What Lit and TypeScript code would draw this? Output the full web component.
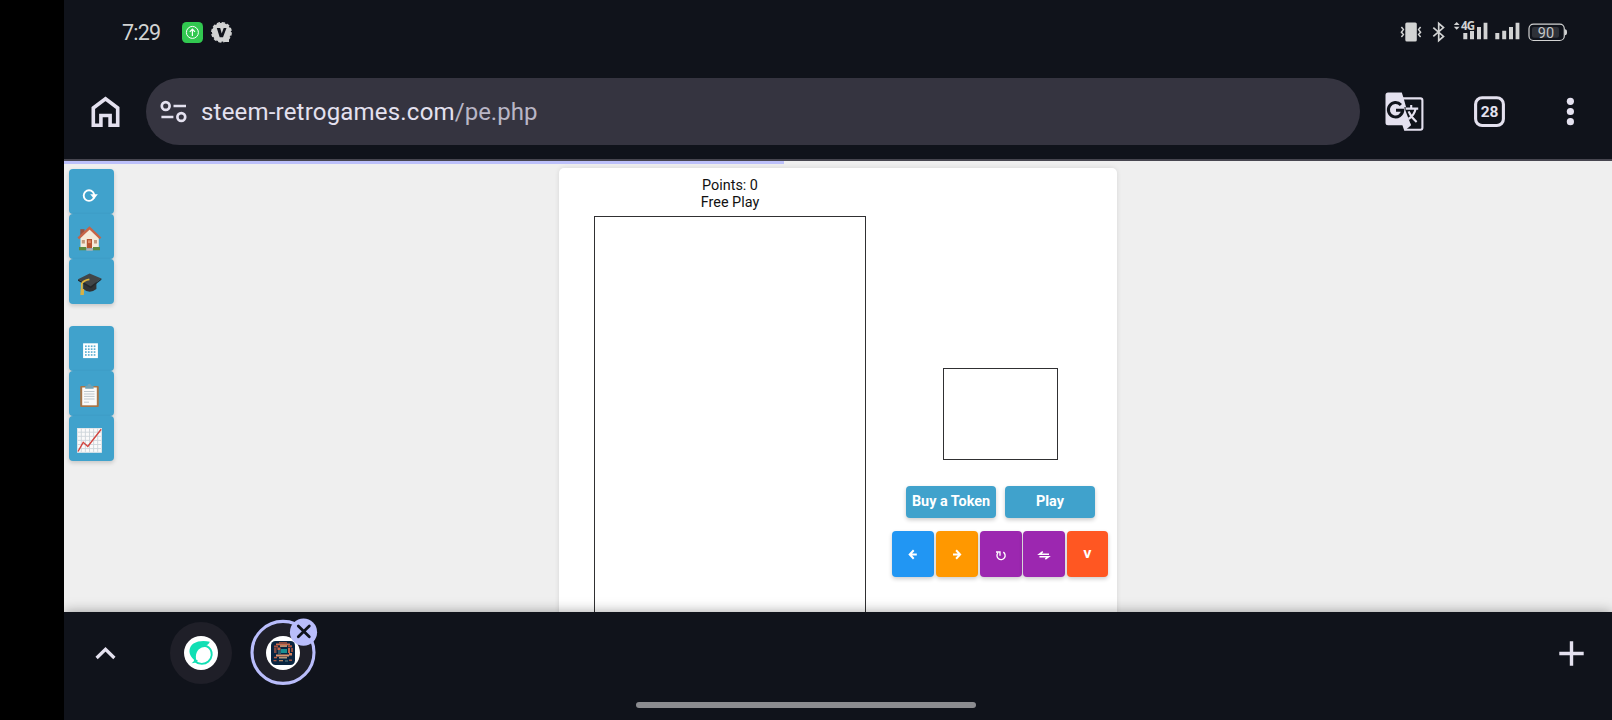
import { LitElement, html, svg, css } from "lit";
import { customElement } from "lit/decorators.js";

const icon = (x: number, y: number, w: number, h: number, body: unknown) =>
  html`<svg width=${w} height=${h} viewBox="${x} ${y} ${w} ${h}" aria-hidden="true">${body}</svg>`;

@customElement("status-bar")
class StatusBar extends LitElement {
  static styles = css`
    :host { display: flex; align-items: center; height: 64px; padding: 0 42px 0 58px; color: #d2d3d3; }
    .time { width: 60px; font: 21.5px/65px Roboto, sans-serif; letter-spacing: -0.8px; }
    .spacer { flex: 1; }
    svg { display: block; }
    .net { font: 700 11.5px "Open Sans", sans-serif; letter-spacing: -0.8px; }
    .bat { font: 14.5px Roboto, sans-serif; }
  `;
  render() {
    return html`
      <span class="time">7:29</span>
      ${icon(182, 0, 54, 64, svg`
        <rect x="182" y="22" width="21" height="21" rx="4.5" fill="#31c850"/>
        <circle cx="192.4" cy="32.4" r="6" fill="none" stroke="#fff" stroke-width="1"/>
        <path d="M192.4 36v-6.6M189.8 31.8l2.6-2.6 2.6 2.6" fill="none" stroke="#fff" stroke-width="1.2"/>
        <circle cx="221.5" cy="32.3" r="9.5" fill="#d2d3d3"/>
        <circle cx="221.5" cy="32.3" r="9.6" fill="none" stroke="#d2d3d3" stroke-width="1.6" stroke-dasharray="3.2 1.83"/>
        <path d="M225 36h4v6h-4z" fill="#d2d3d3"/>
        <path d="M216.8 28h3.4l1.5 5.6 2-5.6h2.8l-3.5 9.2h-3.3z" fill="#10131b"/>`)}
      <span class="spacer"></span>
      ${icon(1400, 0, 170, 64, svg`
        <rect x="1405.3" y="22.5" width="11.5" height="19" rx="1.5" fill="#d2d3d3"/>
        <path d="M1401.4 27l2 2.6-2 2.6 2 2.4-2 2.4M1420.6 27l-2 2.6 2 2.6-2 2.4 2 2.4" fill="none" stroke="#d2d3d3" stroke-width="1.5"/>
        <path d="M1433.3 27.6l10.2 8.8-4.8 4.2V23.4l4.8 4.2-10.2 8.8" fill="none" stroke="#d2d3d3" stroke-width="1.7"/>
        <path d="M1453.8 25l2.9-3 2.9 3zM1453.8 26.8l2.9 3 2.9-3z" fill="#d2d3d3"/>
        <path d="M1463.3 33h4v6.3h-4zM1470 31h4v8.3h-4zM1477 27h4v12.3h-4zM1483.6 22.7h3.8v16.6h-3.8zM1495.3 33h4v6.3h-4zM1502.2 30.7h4v8.6h-4zM1509 27h4v12.3h-4zM1515.6 22.7h3.8v16.6h-3.8z" fill="#d2d3d3"/>
        <text class="net" x="1461" y="30.2" fill="#d2d3d3">4G</text>
        <rect x="1532" y="27" width="27" height="10.7" rx="2" fill="#2e3138"/>
        <rect x="1529" y="24.2" width="35.3" height="16.3" rx="4.5" fill="none" stroke="#d2d3d3" stroke-width="1.2"/>
        <path d="M1565 29.3c1.3 0 2 .8 2 3s-.7 3-2 3z" fill="#d2d3d3"/>
        <text class="bat" x="1546" y="37.5" text-anchor="middle" fill="#c4c5c7">90</text>`)}
    `;
  }
}

@customElement("browser-toolbar")
class BrowserToolbar extends LitElement {
  static styles = css`
    :host { display: flex; align-items: flex-start; height: 95px; padding: 14px 36px 0 25px; box-sizing: border-box; }
    svg { display: block; flex: none; }
    .home { width: 57px; }
    .url { display: flex; align-items: center; width: 1214px; height: 67px; border-radius: 34px; background: #353440; box-sizing: border-box; padding-left: 14px; margin-right: 25px; }
    .text { margin-left: 14px; font: 24px/66px Roboto, sans-serif; color: #e4e1ef; white-space: nowrap; }
    .host { letter-spacing: 0.2px; }
    .path { color: #b9b6c6; }
    .tabs { margin-left: 50px; }
    .more { margin-left: 60px; }
    .count { font: 700 15.5px Roboto, sans-serif; }
  `;
  render() {
    return html`
      <div class="home">${icon(89, 78, 34, 67, svg`<path d="M93.3 125.2V108l12.2-9.2 12.2 9.2v17.2h-7.6v-9.7h-9.2v9.7z" fill="none" stroke="#e4e1ef" stroke-width="3.6"/>`)}</div>
      <div class="url">
        ${icon(160, 78, 27, 67, svg`<g fill="none" stroke="#e4e1ef" stroke-width="2.7"><circle cx="165.7" cy="106" r="3.9"/><circle cx="181.3" cy="117" r="3.9"/><path d="M173.5 106H186M161.4 117h12"/></g>`)}
        <span class="text"><span class="host">steem-retrogames.com</span><span class="path">/pe.php</span></span>
      </div>
      ${icon(1385, 78, 39, 67, svg`
        <path d="M1402 98.4h18.4q2 0 2 2v27.3q0 2-2 2h-15.6" fill="none" stroke="#e4e1ef" stroke-width="2.1"/>
        <path d="M1388 92.5h13.8l1.6 5 7.7 27.7-6.7 5.8-2-5.8H1388q-2.5 0-2.5-2.5V95q0-2.5 2.5-2.5z" fill="#e4e1ef"/>
        <path d="M1400.9 104.9a7.2 7.2 0 1 0 1.9 5.3h-6.8" fill="none" stroke="#10131b" stroke-width="3"/>
        <path d="M1404.2 107.2h3.4l4 15.4-1.2.8z" fill="#10131b"/>
        <path d="M1405.6 108.6h12.6M1411.2 105v3.4M1415.6 108.8c-.8 4.5-3.6 8-7.2 10.2M1408.6 111.4c1.6 4 4.3 7.4 8 10.6" fill="none" stroke="#e4e1ef" stroke-width="2.1"/>`)}
      <div class="tabs">${icon(1474, 78, 31, 67, svg`
        <rect x="1475.6" y="97.7" width="27.8" height="27.8" rx="6.5" fill="none" stroke="#e4e1ef" stroke-width="3.1"/>
        <text class="count" x="1489.6" y="117.3" text-anchor="middle" fill="#e4e1ef">28</text>`)}</div>
      <div class="more">${icon(1565, 78, 11, 67, svg`<g fill="#e4e1ef"><circle cx="1570.4" cy="101.3" r="3.6"/><circle cx="1570.4" cy="111.5" r="3.6"/><circle cx="1570.4" cy="121.7" r="3.6"/></g>`)}</div>
    `;
  }
}

@customElement("side-menu")
class SideMenu extends LitElement {
  static styles = css`
    :host { display: flex; flex-direction: column; gap: 22px; padding: 8px 0 0 5px; }
    .group { display: flex; flex-direction: column; }
    .item { width: 45px; height: 45px; border-radius: 4px; background: #40a2cc; box-shadow: 0 2px 4px rgba(0, 0, 0, 0.17); }
    svg { display: block; }
  `;
  render() {
    const item = (y: number, body: unknown) => html`<div class="item">${icon(69, y, 45, 45, body)}</div>`;
    const grid = [0, 1, 2, 3].flatMap((r) => [0, 1, 2, 3].map((c) =>
      svg`<rect x=${85 + c * 2.9} y=${345.4 + r * 2.9} width="1.7" height="1.7" fill="#5fb0d3"/>`));
    return html`
      <div class="group">
        ${item(169, svg`<circle cx="89" cy="195.6" r="5.3" fill="none" stroke="#fff" stroke-width="1.9"/><path d="M90.2 194.3h7.6l-3.6 4.6z" fill="#fff"/>`)}
        ${item(214, svg`
          <path d="M80.3 229.2h4.2v8h-4.2z" fill="#9c5240"/>
          <path d="M80.5 238l8.8-9.5 9.5 9.5v10.2H80.5z" fill="#f5ead9"/>
          <path d="M78.3 238.4L89.5 228l11 10.4" fill="none" stroke="#c76447" stroke-width="2.4"/>
          <path d="M86.8 239h5.2v9.4h-5.2z" fill="#b9532f"/><path d="M88 240.3h2.8v2.8H88z" fill="#e08d68"/>
          <path d="M81.8 240h3.1v3.5h-3.1zM94 240h3v3.5h-3z" fill="#c49a7b"/>
          <path d="M79 247h7.3v3.3H79zM93 247h7v3.3h-7z" fill="#5d8b3e"/><path d="M86.3 248.4h6.5v2.3h-6.5z" fill="#b3b3b3"/>`)}
        ${item(259, svg`
          <path d="M83.2 281v8q6.5 5.5 13.2 0v-8z" fill="#303436"/>
          <path d="M78 279.3l11.6-5.8 11.8 5-10.8 8z" fill="#414648"/><path d="M78 279.3l12.6 7.2 10.8-8v1.3l-10.6 8.4L78 280.7z" fill="#24282a"/>
          <path d="M89.4 279.4q-6 1-7.6 4.2v7" fill="none" stroke="#e0b63b" stroke-width="1.8"/><path d="M80.8 289h3.4l-.4 6h-3.5z" fill="#d7b143"/>`)}
      </div>
      <div class="group">
        ${item(326, svg`<rect x="83.1" y="343.3" width="14.8" height="14.8" fill="#fff"/>${grid}`)}
        ${item(371, svg`
          <rect x="80.2" y="386" width="18.6" height="21" rx="1" fill="#a87547"/><rect x="82.2" y="387.5" width="14.6" height="17.8" fill="#fafafa"/>
          <path d="M84 391.5h10.5M84 394h10.5M84 396.4h10.5M84 399h10.5M84 402.2h5" stroke="#bfc8ce" stroke-width="1"/>
          <path d="M85.2 388.7v-2.4l2.4-.8q0-1.7 1.7-1.7t1.7 1.7l2.6.8v2.4z" fill="#6fa3b8"/>`)}
        ${item(416, svg`
          <rect x="77.2" y="428" width="24.6" height="24.6" fill="#fafafa"/>
          <path d="M81.3 428v24M85.4 428v24M89.5 428v24M93.6 428v24M97.7 428v24M77 432.2h24.6M77 436.3h24.6M77 440.4h24.6M77 444.5h24.6M77 448.6h24.6" stroke="#cdd5da" stroke-width=".9"/>
          <rect x="77.6" y="428.4" width="23.8" height="23.8" fill="none" stroke="#dfe3e6" stroke-width=".8"/>
          <path d="M78 451.5l5.2-9.2 4.6 4.1 13.4-17.2" fill="none" stroke="#d3453f" stroke-width="1.4"/>`)}
      </div>
    `;
  }
}

@customElement("game-card")
class GameCard extends LitElement {
  static styles = css`
    :host { display: flex; width: 558px; height: 500px; box-sizing: border-box; padding-left: 35px; background: #fff; border-radius: 5px; box-shadow: 0 0 5px rgba(0, 0, 0, 0.1); font-family: Roboto, sans-serif; }
    .board { display: flex; flex-direction: column; align-items: center; width: 272px; padding-top: 9px; color: #111; font-size: 14.4px; line-height: 17px; }
    .field { width: 272px; height: 480px; margin-top: 5px; flex: none; box-sizing: border-box; border: 1px solid #303032; }
    .panel { display: flex; flex-direction: column; align-items: center; margin-left: 26px; width: 217px; padding-top: 200px; }
    .next { width: 115px; height: 92px; box-sizing: border-box; border: 1px solid #303032; }
    .actions { display: flex; gap: 9px; margin-top: 26px; }
    .btn { width: 90px; height: 32px; border-radius: 4px; background: #40a2cc; color: #fff; font-weight: 700; font-size: 14.4px; line-height: 32px; text-align: center; white-space: nowrap; box-shadow: 0 2px 4px rgba(0, 0, 0, 0.2); }
    .keys { display: grid; grid-template-columns: 42px 42px 42px 42px 41px; column-gap: 1.75px; margin: 13px 1px 0 0; }
    .key { display: grid; place-items: center; height: 46px; border-radius: 4px; color: #fff; font: 900 11.8px/47px Roboto, sans-serif; box-shadow: 0 2px 4px rgba(0, 0, 0, 0.2); }
    .left { background: #2196f3; }
    .right { background: #ff9800; }
    .spin { background: #9c27b0; }
    .down { background: #ff5722; }
    svg { display: block; }
  `;
  render() {
    return html`
      <div class="board"><span>Points: 0</span><span>Free Play</span><div class="field"></div></div>
      <div class="panel">
        <div class="next"></div>
        <div class="actions"><div class="btn">Buy a Token</div><div class="btn">Play</div></div>
        <div class="keys">
          <div class="key left">${icon(892, 531, 42, 46, svg`<path d="M916.8 554.5h-6.3M913.7 550.3l-4 4.2 4 4.2" fill="none" stroke="#fff" stroke-width="2"/>`)}</div>
          <div class="key right">${icon(936, 531, 42, 46, svg`<path d="M953 554.5h6.3M956.1 550.3l4 4.2-4 4.2" fill="none" stroke="#fff" stroke-width="2"/>`)}</div>
          <div class="key spin">${icon(979, 531, 42, 46, svg`<path d="M1002.3 552.1A4.1 4.1 0 1 1 996.9 552.9M995 552h4v3.8" fill="none" stroke="#fff" stroke-width="1.35"/>`)}</div>
          <div class="key spin">${icon(1023, 531, 42, 46, svg`<path d="M1049 554.3h-9.6l3.4-2.6M1039.4 556.7h9.2l-3.3 2.5" fill="none" stroke="#fff" stroke-width="1.5"/>`)}</div>
          <div class="key down"><span>V</span></div>
        </div>
      </div>
    `;
  }
}

@customElement("tab-strip")
class TabStrip extends LitElement {
  static styles = css`
    :host { display: flex; flex-direction: column; align-items: center; height: 108px; background: #10131b; box-shadow: 0 0 12px rgba(0, 0, 0, 0.36); position: relative; }
    .row { display: flex; align-items: center; justify-content: space-between; width: 100%; height: 90px; }
    .pill { width: 340px; height: 6px; border-radius: 3px; background: #8b8c90; margin-right: 64px; }
    svg { display: block; }
  `;
  render() {
    const px: [number, number, number, number, string][] = [
      [279, 642, 8, 1.5, "#8f4a3c"], [276, 643.5, 14, 1.8, "#c7694a"], [274, 645.5, 4, 2, "#a34f3e"], [280, 645.3, 7, 1.5, "#e2a77a"],
      [288, 645.3, 4, 2, "#b1543f"], [274, 648, 2.5, 5, "#7e4a45"], [277.5, 647.5, 3, 2.5, "#c7664a"], [278, 650, 3, 4, "#315a68"],
      [281, 649, 6, 4, "#1a8f93"], [288, 648, 2, 5, "#c7694a"], [291, 648, 2, 4, "#8f4a3c"], [276, 654.5, 13, 2, "#e0936a"],
      [274, 656.8, 3, 1.5, "#b95f45"], [289, 653, 3, 2.5, "#d5805c"], [279, 657.2, 8, 1.2, "#e2b48a"], [273.5, 660, 3, 1.3, "#a5523f"],
      [279, 660, 4, 1.3, "#b98560"], [285, 660.3, 3, 1.3, "#4c7078"], [289, 659.5, 3, 1.5, "#a5523f"],
    ];
    return html`
      <div class="row">
        ${icon(64, 612, 300, 90, svg`
          <path d="M96.6 658l8.9-8.7 8.9 8.7" fill="none" stroke="#e4e1ef" stroke-width="3.2"/>
          <circle cx="201" cy="653" r="31" fill="#1f1f28"/><circle cx="201" cy="653" r="17" fill="#fff"/>
          <path d="M209.8 641.8c-5-1.2-11.8-1.2-16.3 1.8-4.5 3.3-5.2 9-2.2 13.2 1.3 1.8 2.6 3.4 5.2 4-1.8-5.8.4-11.4 5.3-13.3 2.4-.9 5-.6 7.2.6-.8-1.2-1.6-2-2.6-2.8 1.5-.4 2.7-1.6 3.4-3.5z" fill="#11dfb4"/>
          <path d="M206.2 645.8a9.6 9.6 0 0 1 5.5 9.2c-.5 5.4-5 9-10 8.900-2.600 0-5-1-6.800-2.600" fill="none" stroke="#11dfb4" stroke-width="1.900"/>
          <path d="M191.500 663.300c3-.2 5.200-1 6.500-2.600l-4-2.200c.5 2-.5 3.500-2.500 4.800z" fill="#11dfb4"/>
          <circle cx="283" cy="652.4" r="31" fill="#1f1f28" stroke="#b9bdfb" stroke-width="3.1"/>
          <circle cx="283" cy="653" r="17" fill="#fff"/><rect x="271" y="641" width="24" height="24" rx="4.5" fill="#0a2540"/>
          ${px.map(([x, y, w, h, c]) => svg`<rect x=${x} y=${y} width=${w} height=${h} fill=${c}/>`)}
          <circle cx="303.5" cy="632.2" r="13.6" fill="#b9bdfb"/>
          <path d="M298.3 626l11 10.8M309.3 626l-11 10.8" stroke="#10131b" stroke-width="2.8" stroke-linecap="round"/>`)}
        ${icon(1552, 612, 60, 90, svg`<path d="M1559.3 653.5h24.4M1571.5 641.2v24.6" stroke="#e4e1ef" stroke-width="3.4"/>`)}
      </div>
      <div class="pill"></div>
    `;
  }
}

@customElement("app-root")
class AppRoot extends LitElement {
  static styles = css`
    :host { display: flex; width: 1612px; height: 720px; box-sizing: border-box; padding-left: 64px; background: #000; overflow: hidden; }
    .screen { display: flex; flex-direction: column; width: 1548px; background: #10131b; overflow: hidden; }
    .rule { height: 2px; background: #474650; flex: none; }
    .page { height: 451px; display: grid; grid-template-columns: 495px 558px; grid-template-rows: 3px 1fr; background: #efefef; overflow: hidden; }
    .progress { grid-column: 1 / -1; width: 720px; height: 3px; background: #bcc0fa; }
    side-menu { margin-top: -3px; }
    game-card { margin-top: 4px; }
    status-bar, browser-toolbar, tab-strip { flex: none; }
  `;
  render() {
    return html`
      <div class="screen">
        <status-bar></status-bar>
        <browser-toolbar></browser-toolbar>
        <div class="rule"></div>
        <div class="page">
          <div class="progress"></div>
          <side-menu></side-menu>
          <game-card></game-card>
        </div>
        <tab-strip></tab-strip>
      </div>
    `;
  }
}
